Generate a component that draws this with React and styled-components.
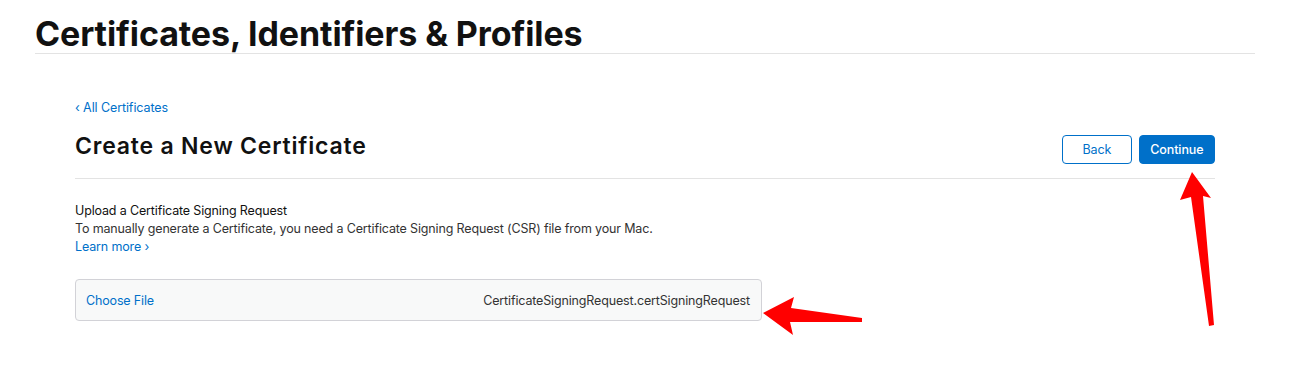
import React from 'react';
import styled, { createGlobalStyle } from 'styled-components';

const GlobalStyle = createGlobalStyle`
  body {
    margin: 0;
    background: #fff;
    font-family: Inter, "Liberation Sans", sans-serif;
    color: #111;
  }
`;

const Page = styled.div`
  position: relative;
  width: 1296px;
  height: 374px;
  overflow: hidden;
`;

const Header = styled.header`
  margin: 0 41px 0 35px;
  padding-top: 15px;
  border-bottom: 1px solid #e3e3e3;
`;

const PageTitle = styled.h1`
  margin: 0;
  font-size: 34px;
  font-weight: 700;
  line-height: 38px;
  letter-spacing: -0.1px;
  color: #111;
`;

const Content = styled.main`
  margin: 0 81px 0 75px;
  padding-top: 45px;
`;

const BackLink = styled.a`
  display: block;
  width: fit-content;
  font-size: 12.5px;
  line-height: 18px;
  letter-spacing: -0.1px;
  color: #0070c9;
  text-decoration: none;
`;

const TitleRow = styled.div`
  display: flex;
  align-items: flex-end;
  justify-content: space-between;
  margin-top: 14px;
  padding-bottom: 14px;
  border-bottom: 1px solid #e3e3e3;
`;

const SectionTitle = styled.h2`
  margin: 0;
  padding-bottom: 3px;
  font-size: 23px;
  font-weight: 600;
  line-height: 30px;
  letter-spacing: 0.8px;
  color: #111;
`;

const Actions = styled.div`
  display: flex;
  gap: 7px;
`;

const Button = styled.button`
  height: 29px;
  padding: 0 ${p => (p.$primary ? '10.5px' : '19.5px')};
  border-radius: 4px;
  font-family: inherit;
  font-size: 12.5px;
  letter-spacing: -0.1px;
  font-weight: ${p => (p.$primary ? 500 : 400)};
  border: 1px solid #0070c9;
  background: ${p => (p.$primary ? '#0070c9' : '#fff')};
  color: ${p => (p.$primary ? '#fff' : '#0070c9')};
  cursor: pointer;
`;

const Body = styled.section`
  padding-top: 23px;
  font-size: 12.5px;
  line-height: 18px;
  letter-spacing: -0.15px;
`;

const Label = styled.div`
  color: #111;
`;

const Text = styled.div`
  color: #333;
`;

const Link = styled.a`
  display: block;
  width: fit-content;
  color: #0070c9;
  text-decoration: none;
`;

const FileBox = styled.div`
  display: flex;
  align-items: center;
  justify-content: space-between;
  width: 687px;
  box-sizing: border-box;
  height: 42px;
  margin-top: 23px;
  padding: 0 11px 0 10px;
  background: #f8f9f9;
  border: 1px solid #d2d2d7;
  border-radius: 4px;
  font-size: 12.5px;
  letter-spacing: -0.15px;
`;

const ChooseFile = styled.span`
  color: #0070c9;
`;

const FileName = styled.span`
  color: #333;
`;

const Overlay = styled.svg`
  position: absolute;
  left: 0;
  top: 0;
  pointer-events: none;
`;

export default function App() {
  return (
    <Page>
      <GlobalStyle />
      <Header>
        <PageTitle>Certificates, Identifiers &amp; Profiles</PageTitle>
      </Header>
      <Content>
        <BackLink href="#">‹ All Certificates</BackLink>
        <TitleRow>
          <SectionTitle>Create a New Certificate</SectionTitle>
          <Actions>
            <Button>Back</Button>
            <Button $primary>Continue</Button>
          </Actions>
        </TitleRow>
        <Body>
          <Label>Upload a Certificate Signing Request</Label>
          <Text>
            To manually generate a Certificate, you need a Certificate Signing Request (CSR) file from your Mac.
          </Text>
          <Link href="#">Learn more ›</Link>
        </Body>
        <FileBox>
          <ChooseFile>Choose File</ChooseFile>
          <FileName>CertificateSigningRequest.certSigningRequest</FileName>
        </FileBox>
      </Content>
      <Overlay width="1296" height="374" viewBox="0 0 1296 374">
        <path
          d="M763 313 L794 297 L791 308 L862 318 L862 322 L790 322 L793 335 Z"
          fill="#ff0000"
        />
        <path
          d="M1192 172 L1211 198 L1203 196 L1214 325 L1209 326 L1191 197 L1180 200 Z"
          fill="#ff0000"
        />
      </Overlay>
    </Page>
  );
}
